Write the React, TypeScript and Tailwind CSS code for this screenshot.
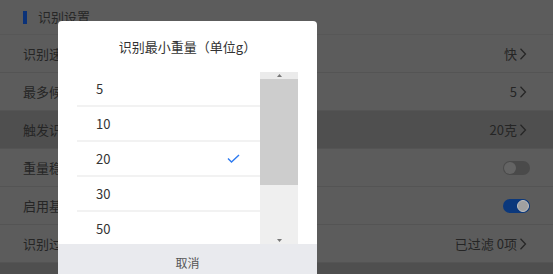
import React from "react";

const Chevron = () => (
  <svg width="8" height="12" viewBox="0 0 8 12" className="ml-[2px]">
    <polyline points="1.5,0.8 6.5,6 1.5,11.2" fill="none" stroke="#262626" strokeWidth="1.25" />
  </svg>
);

const Row = ({ label, right, dark }: { label: string; right: React.ReactNode; dark?: boolean }) => (
  <div
    className={`h-[38px] flex items-center justify-between pl-[23px] pr-[26px] border-b border-[#545454] ${
      dark ? "bg-[#4f4f4f]" : ""
    }`}
  >
    <span className="text-[13px] text-[#252525]">{label}</span>
    <div className="flex items-center text-[13px] text-[#252525]">{right}</div>
  </div>
);

const Toggle = ({ on }: { on?: boolean }) => (
  <div
    className={`w-[27px] h-[14px] rounded-full flex items-center px-[1px] mr-[-3px] ${
      on ? "bg-[#0b387c] justify-end" : "bg-[#4a4a4a] justify-start"
    }`}
  >
    <div
      className={`w-[12px] h-[12px] rounded-full ${
        on ? "bg-[#a0a0a0] border border-[#c0c0c0]" : "bg-[#646464]"
      }`}
    />
  </div>
);

export default function App() {
  const items = ["5", "10", "20", "30", "50"];
  return (
    <div
      className="relative w-[553px] h-[274px] overflow-hidden bg-[#5c5c5c]"
      style={{ fontFamily: '"Noto Sans CJK SC", "Noto Sans", sans-serif' }}
    >
      <div className="h-[35px] flex items-center pl-[23px] border-b border-[#575757]">
        <div className="w-[4px] h-[13px] bg-[#0b3278]" />
        <span className="ml-[11px] text-[13px] text-[#272727]">识别设置</span>
      </div>
      <Row label="识别速度" right={<><span>快</span><Chevron /></>} />
      <Row label="最多候选" right={<><span>5</span><Chevron /></>} />
      <Row label="触发识别" dark right={<><span>20克</span><Chevron /></>} />
      <Row label="重量稳定" right={<Toggle />} />
      <Row label="启用基础" right={<Toggle on />} />
      <Row label="识别过滤" right={<><span>已过滤 0项</span><Chevron /></>} />
      <div className="h-[20px] bg-[#4f4f4f]" />

      <div className="absolute left-[58px] top-[21px] w-[259px] h-[263px] bg-white rounded-t-[4px] flex flex-col overflow-hidden">
        <div className="h-[51px] flex items-center justify-center text-[13px] text-[#333333]">
          识别最小重量（单位g）
        </div>
        <div className="h-[172px] mx-[19px] flex overflow-hidden">
          <div className="flex-1 flex flex-col">
            {items.map((v) => (
              <div
                key={v}
                className="h-[35px] shrink-0 flex items-center justify-between pl-[19px] pr-[20px] border-b-[2px] border-[#f2f2f2] text-[13px] text-[#333333]"
              >
                <span>{v}</span>
                {v === "20" && (
                  <svg width="13" height="9" viewBox="0 0 13 9">
                    <polyline points="1,4.5 4.5,8 12,1" fill="none" stroke="#2f7bf0" strokeWidth="1.4" />
                  </svg>
                )}
              </div>
            ))}
          </div>
          <div className="w-[38px] flex flex-col bg-[#efefef]">
            <div className="h-[7px] bg-[#ebebeb] flex items-center justify-center">
              <svg width="5" height="3" viewBox="0 0 5 3">
                <polygon points="2.5,0 5,3 0,3" fill="#777" />
              </svg>
            </div>
            <div className="h-[106px] bg-[#cdcdcd]" />
            <div className="flex-1" />
            <div className="h-[7px] flex items-center justify-center">
              <svg width="5" height="3" viewBox="0 0 5 3">
                <polygon points="0,0 5,0 2.5,3" fill="#777" />
              </svg>
            </div>
          </div>
        </div>
        <div className="h-[38px] shrink-0 bg-[#e9eaee] flex items-center justify-center text-[12px] text-[#555555]">
          取消
        </div>
      </div>
    </div>
  );
}
